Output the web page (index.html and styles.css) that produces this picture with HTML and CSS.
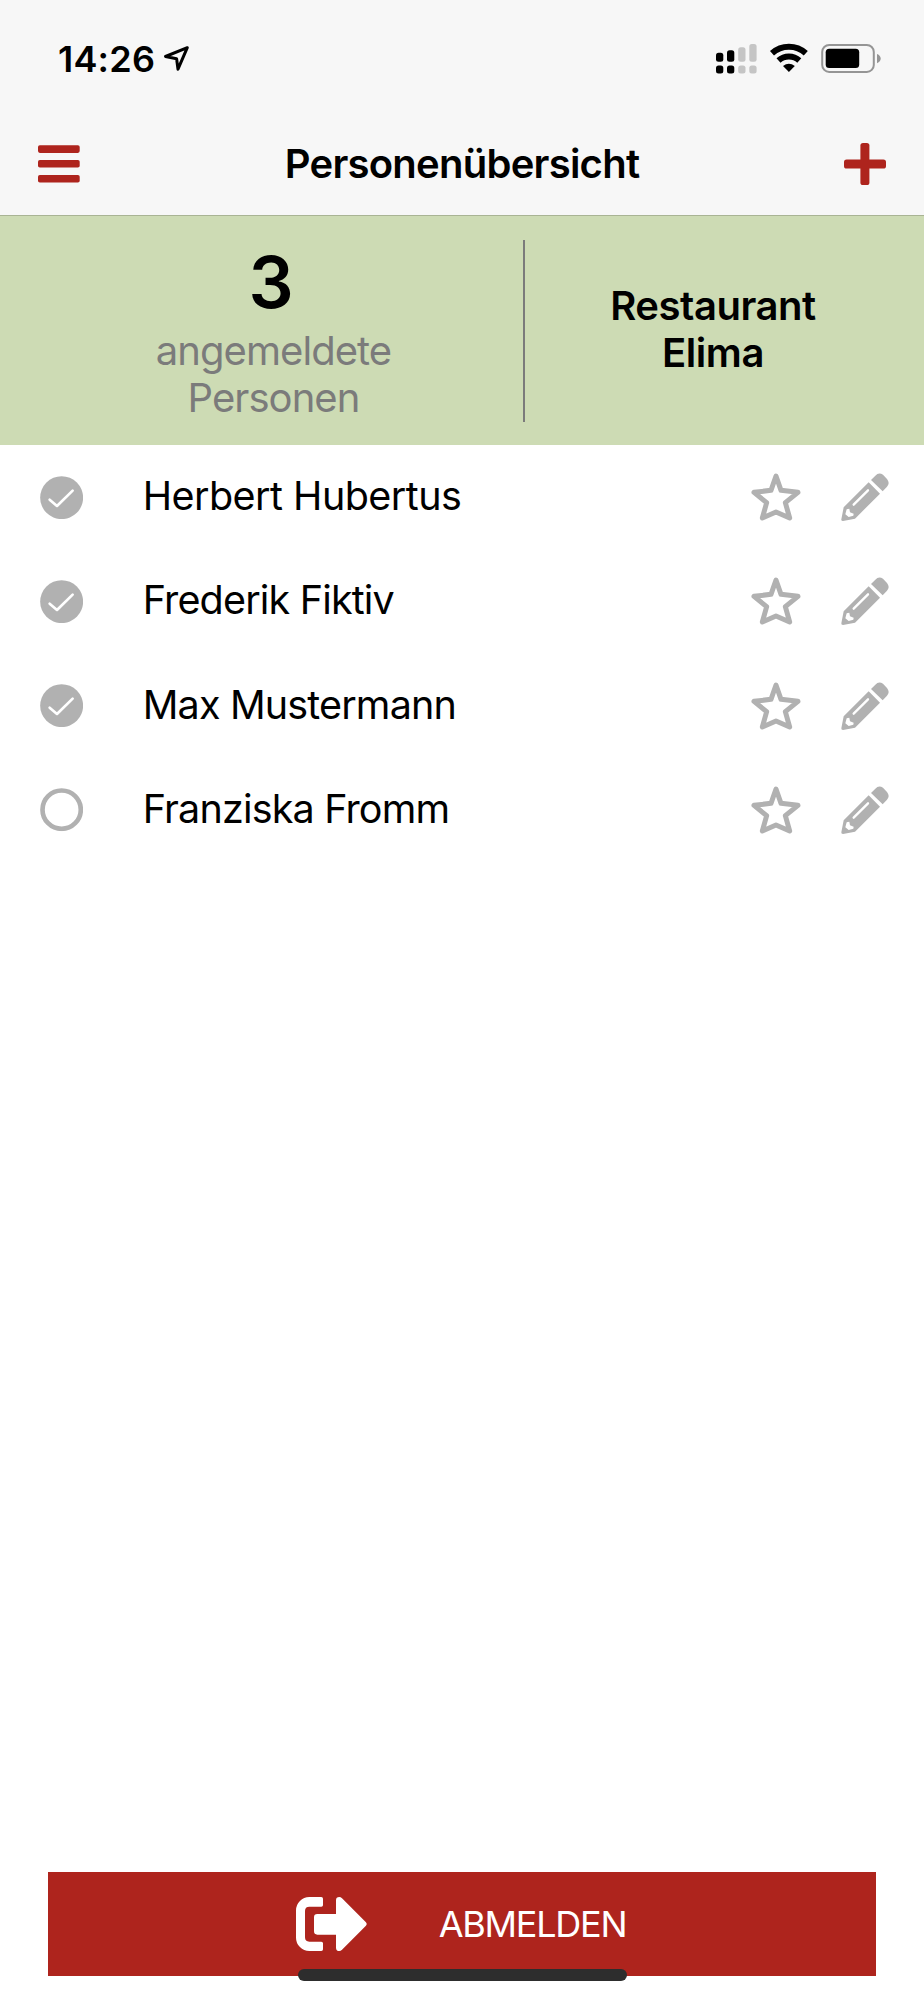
FILE: index.html
```
<!DOCTYPE html>
<html lang="de">
<head>
<meta charset="utf-8">
<title>Personenübersicht</title>
<link rel="stylesheet" href="styles.css">
</head>
<body>
<svg class="defs" width="0" height="0">
  <symbol id="check" viewBox="120 105 130 130">
    <circle cx="185" cy="170" r="64.5" fill="#b1b1b1"/>
    <path d="M149 176L171 195L218 149" fill="none" stroke="#fff" stroke-width="8" stroke-linecap="round" stroke-linejoin="round"/>
  </symbol>
  <symbol id="ring" viewBox="120 105 130 130">
    <circle cx="185" cy="170" r="57.5" fill="none" stroke="#b1b1b1" stroke-width="14"/>
  </symbol>
  <symbol id="star" viewBox="81 66 150 150">
    <path d="M156 78L171 121L222 127L184 158L197 204L156 186L115 204L128 158L90 127L141 121Z" fill="none" stroke="#b1b1b1" stroke-width="15" stroke-linejoin="round"/>
  </symbol>
  <symbol id="pencil" viewBox="347 66 150 150">
    <path d="M440 90L453 77Q463 66 476 74L488 87Q498 100 488 110L475 124Z" fill="#b1b1b1"/>
    <path d="M433 97L467 131L392 206L356 213Q350 213 351 208L358 172Z" fill="#b1b1b1"/>
    <path d="M388 164L431 121" stroke="#fff" stroke-width="7" stroke-linecap="round"/>
    <path d="M367 178L375 176L377 187L388 191L387 197L373 201L363 193Z" fill="#fff"/>
  </symbol>
</svg>
<main class="screen">
  <div class="status">
    <span class="time">14:26</span>
    <svg class="location" viewBox="162 44 29 29"><path d="M187.3 47.7L165.5 56.5L176.6 58.7L178 69.2Z" fill="none" stroke="#000" stroke-width="3" stroke-linejoin="round"/></svg>
    <svg class="indicators" viewBox="716 43 165 31">
      <g fill="#000"><rect x="716" y="52.7" width="7.3" height="9" rx="2.5"/><rect x="727" y="50.3" width="7.3" height="11.4" rx="2.5"/><rect x="716" y="65.6" width="7.3" height="8" rx="2.5"/><rect x="727" y="65.6" width="7.3" height="8" rx="2.5"/></g>
      <g fill="#c5c5c5"><rect x="738.2" y="47.3" width="7.3" height="14.4" rx="2.5"/><rect x="749.3" y="44" width="7.3" height="17.7" rx="2.5"/><rect x="738.2" y="65.6" width="7.3" height="8" rx="2.5"/><rect x="749.3" y="65.6" width="7.3" height="8" rx="2.5"/></g>
      <path d="M772 53.2A25.3 25.3 0 0 1 805.8 53.2M778.5 60.4A15.6 15.6 0 0 1 799.3 60.4" fill="none" stroke="#000" stroke-width="6"/>
      <path d="M788.9 72L783 66Q788.9 61.5 794.8 66Z"/>
      <rect x="822.2" y="44.9" width="51.6" height="27" rx="7" fill="none" stroke="#959595" stroke-width="2"/>
      <rect x="825.7" y="48.7" width="33.5" height="19.3" rx="3.5"/>
      <path d="M877 54Q880.7 55.5 880.7 58.6T877 63.3Z" fill="#959595"/>
    </svg>
  </div>
  <header class="nav">
    <svg class="menu" viewBox="0 0 42 38" fill="#ae241d"><rect width="41.7" height="7.6" y=".3" rx="1.8"/><rect width="41.7" height="7.6" y="15" rx="1.8"/><rect width="41.7" height="7.6" y="29.9" rx="1.8"/></svg>
    <h1 class="title">Personenübersicht</h1>
    <svg class="plus" viewBox="0 0 42 42" fill="#ae241d"><rect x="16.4" width="9" height="42" rx="2.6"/><rect y="16.5" width="42" height="9" rx="2.6"/></svg>
  </header>
  <section class="summary">
    <div class="count">
      <strong class="number">3</strong>
      <p class="label">angemeldete<br>Personen</p>
    </div>
    <h2 class="place">Restaurant<br>Elima</h2>
  </section>
  <ul class="people">
    <li class="person"><svg class="state"><use href="#check"/></svg><span class="name">Herbert Hubertus</span><svg class="icon"><use href="#star"/></svg><svg class="icon"><use href="#pencil"/></svg></li>
    <li class="person"><svg class="state"><use href="#check"/></svg><span class="name">Frederik Fiktiv</span><svg class="icon"><use href="#star"/></svg><svg class="icon"><use href="#pencil"/></svg></li>
    <li class="person"><svg class="state"><use href="#check"/></svg><span class="name">Max Mustermann</span><svg class="icon"><use href="#star"/></svg><svg class="icon"><use href="#pencil"/></svg></li>
    <li class="person"><svg class="state"><use href="#ring"/></svg><span class="name">Franziska Fromm</span><svg class="icon"><use href="#star"/></svg><svg class="icon"><use href="#pencil"/></svg></li>
  </ul>
  <button class="logout">
    <svg class="exit" viewBox="828 141 212 162" fill="#fff"><path d="M868 141H904Q909 141 909 146V165Q909 170 904 170H868Q855 170 855 183V262Q855 275 868 275H904Q909 275 909 280V298Q909 303 904 303H868A40 40 0 0 1 828 263V181A40 40 0 0 1 868 141Z"/><path d="M948 192V151Q948 141 958 141Q962 141 966 145L1037 216Q1043 222 1037 228L966 299Q962 303 958 303Q948 303 948 293V254H892Q882 254 882 244V202Q882 192 892 192Z"/></svg>
    <span class="action">ABMELDEN</span>
  </button>
  <div class="home"></div>
</main>
</body>
</html>
```

FILE: styles.css
```
* { box-sizing: border-box; }
body { margin: 0; background: #fff; color: #000; font-family: Inter, "Liberation Sans", sans-serif; }
svg { display: block; flex: none; }
.defs { position: absolute; }
.screen { position: relative; display: flex; flex-direction: column; width: 924px; height: 2000px; overflow: hidden; }
.status { display: flex; align-items: center; height: 117px; padding: 0 43px 0 58px; background: #f7f7f7; }
.time { width: 104px; font-size: 36px; font-weight: 600; line-height: 44px; letter-spacing: .2px; white-space: nowrap; }
.location { width: 29px; height: 29px; }
.indicators { width: 165px; height: 31px; margin-left: auto; }
.nav { display: flex; align-items: center; justify-content: space-between; height: 99px; padding: 0 38px 5px; background: #f7f7f7; border-bottom: 1px solid #a9b494; }
.menu { width: 42px; height: 38px; }
.title { margin: 0; padding-top: 1px; font-size: 40px; font-weight: 600; line-height: 48px; letter-spacing: -.75px; }
.plus { width: 42px; height: 42px; }
.summary { display: flex; align-items: center; height: 229px; background: #cddbb4; }
.count { display: flex; flex-direction: column; align-items: center; width: 525px; height: 182px; padding-left: 24px; border-right: 2px solid #7b7b7b; text-align: center; }
.number { margin: 0 5px 2px 0; font-size: 71px; font-weight: 600; line-height: 85px; }
.label { margin: 0; font-size: 40px; line-height: 47.3px; letter-spacing: -.95px; color: #7b7b7b; }
.place { flex: 1; margin: 0; padding: 0 23px 4px 0; font-size: 40px; font-weight: 600; line-height: 47px; letter-spacing: -.45px; text-align: center; }
.people { margin: 0; padding: 0; list-style: none; }
.person { display: flex; align-items: center; height: 104.3px; padding: 0 34.3px 0 40px; }
.state { width: 43.3px; height: 43.3px; }
.name { flex: 1; padding: 0 0 2px 59.4px; font-size: 39.5px; line-height: 48px; letter-spacing: -.83px; }
.person:first-child .name { letter-spacing: -.53px; }
.icon { width: 50px; height: 50px; margin-left: 38.7px; }
.logout { display: flex; align-items: center; height: 104px; margin: auto 47.6px 24px; padding: 0 0 0 248.4px; border: 0; background: #ae241d; color: #fff; font-family: inherit; }
.exit { width: 70.7px; height: 54px; }
.action { margin-left: 72px; font-size: 36px; line-height: 44px; letter-spacing: -1.25px; }
.home { position: absolute; left: 297.7px; top: 1969px; width: 329.3px; height: 11.7px; border-radius: 6px; background: #2d2d2d; }
```
